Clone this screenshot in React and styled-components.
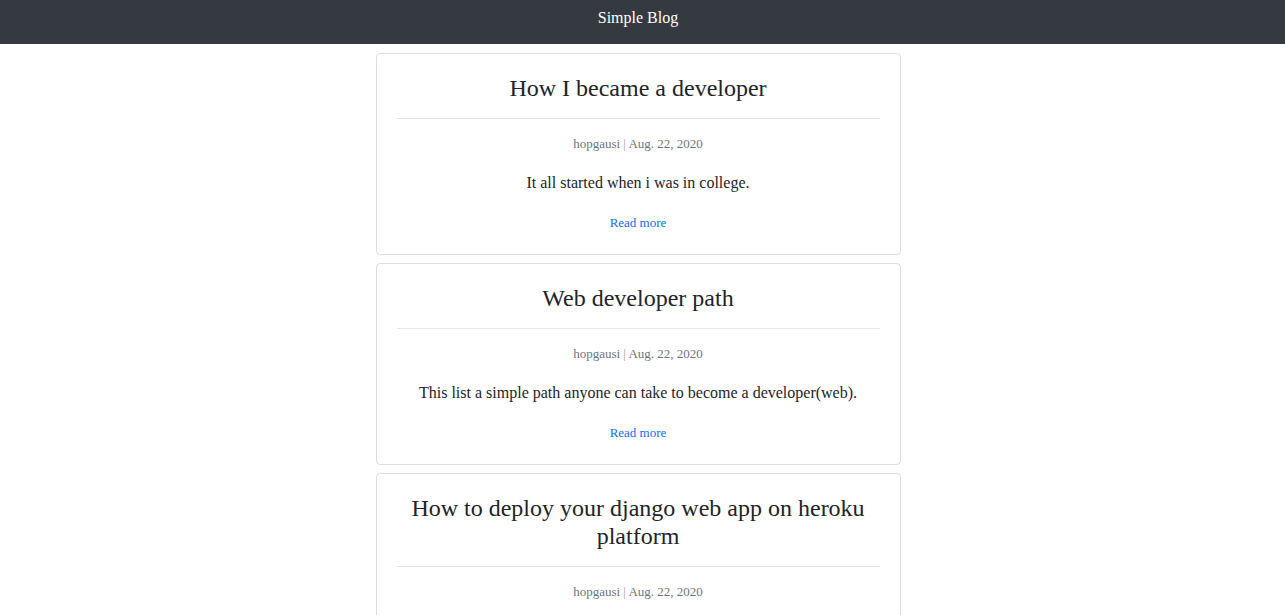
import React from 'react';
import styled, { createGlobalStyle } from 'styled-components';

const GlobalStyle = createGlobalStyle`
    body {
        margin: 0;
        background: #fff;
        font-family: "Liberation Serif", "Times New Roman", serif;
        color: #212529;
    }
`;

const Navbar = styled.nav`
    height: 44px;
    background: #343a40;
    display: flex;
    justify-content: center;
    padding: 8px 9px 0 0;
    box-sizing: border-box;
`;

const Brand = styled.span`
    color: #fff;
    font-size: 16px;
    line-height: 19px;
`;

const Page = styled.div`
    padding-right: 9px;
`;

const Feed = styled.main`
    width: 525px;
    margin: 9px auto 0;
    display: flex;
    flex-direction: column;
    gap: 8px;
`;

const Card = styled.article`
    border: 1px solid rgba(0, 0, 0, 0.13);
    border-radius: 4px;
    padding: 20px 20px 21px;
    text-align: center;
`;

const Title = styled.h3`
    margin: 0;
    font-size: 24px;
    font-weight: 400;
    line-height: 28px;
`;

const Rule = styled.hr`
    margin: 16px 0 15px;
    border: 0;
    border-top: 1px solid rgba(0, 0, 0, 0.1);
`;

const Meta = styled.p`
    margin: 0;
    font-size: 13px;
    line-height: 20px;
    color: #6c757d;

    .sep {
        color: #c0959a;
    }
`;

const Excerpt = styled.p`
    margin: 17px 0 0;
    font-size: 16px;
    line-height: 24px;
`;

const ReadMore = styled.a`
    display: inline-block;
    margin-top: 18px;
    font-size: 13px;
    line-height: 20px;
    color: #0d6efd;
    text-decoration: none;
`;

const posts = [
    { title: 'How I became a developer', excerpt: 'It all started when i was in college.' },
    { title: 'Web developer path', excerpt: 'This list a simple path anyone can take to become a developer(web).' },
    { title: 'How to deploy your django web app on heroku platform', excerpt: 'A step by step guide to deploying your django app on heroku.' },
];

const App = () => (
    <>
        <GlobalStyle />
        <Navbar>
            <Brand>Simple Blog</Brand>
        </Navbar>
        <Page>
            <Feed>
                {posts.map((post) => (
                    <Card key={post.title}>
                        <Title>{post.title}</Title>
                        <Rule />
                        <Meta>hopgausi <span className="sep">|</span> Aug. 22, 2020</Meta>
                        <Excerpt>{post.excerpt}</Excerpt>
                        <ReadMore href="#">Read more</ReadMore>
                    </Card>
                ))}
            </Feed>
        </Page>
    </>
);

export default App;
